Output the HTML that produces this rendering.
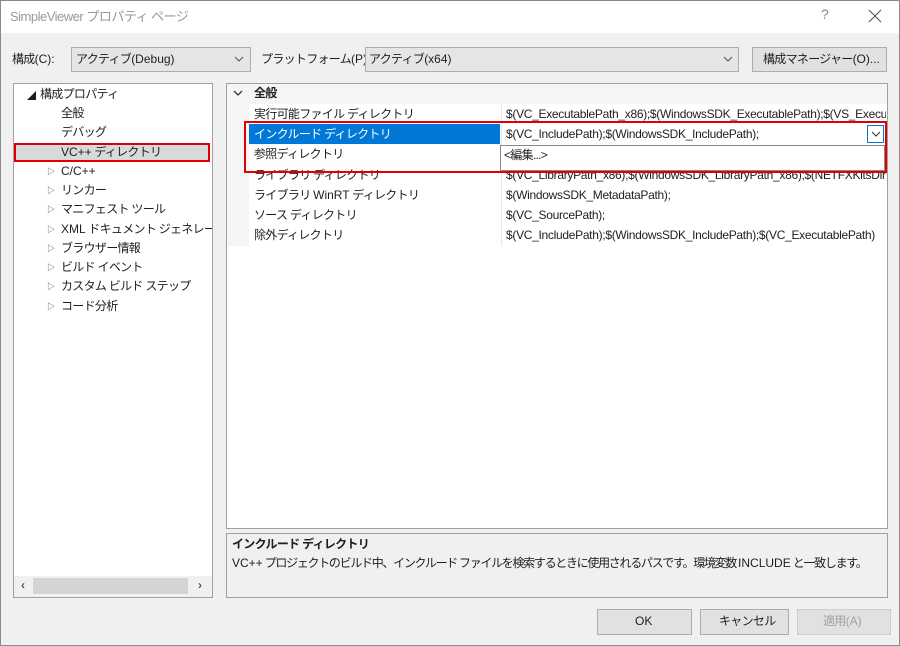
<!DOCTYPE html>
<html><head><meta charset="utf-8"><style>
*{margin:0;padding:0;box-sizing:border-box}
body{width:900px;height:646px;background:#f0f0f0;font-family:"Liberation Sans","Noto Sans CJK JP",sans-serif;font-size:12px;letter-spacing:-0.7px;color:#1e1e1e;position:relative;overflow:hidden}
.a{position:absolute;white-space:nowrap}
.box{position:absolute;border:1px solid #adadad}
.t{line-height:19px}
.l{letter-spacing:0}
.tri{position:absolute;left:47px;font-size:8px;color:#444}
</style></head><body>
<div class="a" style="left:0;top:0;width:900px;height:646px;border:1px solid #8a8a8a"></div>
<div class="a" style="left:1px;top:1px;width:898px;height:32px;background:#fff"></div>
<div class="a t" style="left:10px;top:7px;font-size:13px;color:#999;letter-spacing:-0.5px">SimpleViewer プロパティ ページ</div>
<div class="a" style="left:821px;top:6px;font-size:14px;color:#888">?</div>
<svg class="a" style="left:868px;top:9px" width="14" height="14"><path d="M1 1L13 13M13 1L1 13" stroke="#555" stroke-width="1.1"/></svg>

<div class="a t" style="left:12px;top:50px">構成<span class="l">(C):</span></div>
<div class="box" style="left:71px;top:47px;width:180px;height:25px;background:#e5e5e5"></div>
<div class="a t" style="left:76px;top:50px">アクティブ<span class="l">(Debug)</span></div>
<svg class="a" style="left:234px;top:56px" width="10" height="7"><path d="M1 1L5 5L9 1" stroke="#555" fill="none"/></svg>
<div class="a t" style="left:261px;top:50px">プラットフォーム<span class="l">(P):</span></div>
<div class="box" style="left:365px;top:47px;width:374px;height:25px;background:#e5e5e5"></div>
<div class="a t" style="left:369px;top:50px">アクティブ<span class="l">(x64)</span></div>
<svg class="a" style="left:723px;top:56px" width="10" height="7"><path d="M1 1L5 5L9 1" stroke="#555" fill="none"/></svg>
<div class="box" style="left:752px;top:47px;width:135px;height:25px;background:#e1e1e1"></div>
<div class="a t" style="left:763px;top:50px">構成マネージャー<span class="l">(O)...</span></div>

<div class="box" style="left:13px;top:83px;width:200px;height:515px;background:#fff;border-color:#a0a0a0"></div>
<div class="a" style="left:14px;top:143px;width:196px;height:19px;background:#d9d9d9;border:2px solid #e00000"></div>
<div class="a" style="left:27px;top:89px;font-size:9px">◢</div>
<div class="a t" style="left:40px;top:85px">構成プロパティ</div>
<div class="a t" style="left:61px;top:104px">全般</div>
<div class="a t" style="left:61px;top:123px">デバッグ</div>
<div class="a t" style="left:61px;top:143px"><span class="l">VC++</span> ディレクトリ</div>
<div class="a" style="left:14px;top:162px;width:198px;height:160px;overflow:hidden">
<div class="tri" style="left:33px;top:4px">▷</div><div class="a t l" style="left:47px;top:0">C/C++</div>
<div class="tri" style="left:33px;top:23px">▷</div><div class="a t" style="left:47px;top:19px">リンカー</div>
<div class="tri" style="left:33px;top:42px">▷</div><div class="a t" style="left:47px;top:38px">マニフェスト ツール</div>
<div class="tri" style="left:33px;top:62px">▷</div><div class="a t" style="left:47px;top:58px"><span class="l">XML</span> ドキュメント ジェネレーター</div>
<div class="tri" style="left:33px;top:81px">▷</div><div class="a t" style="left:47px;top:77px">ブラウザー情報</div>
<div class="tri" style="left:33px;top:100px">▷</div><div class="a t" style="left:47px;top:96px">ビルド イベント</div>
<div class="tri" style="left:33px;top:119px">▷</div><div class="a t" style="left:47px;top:115px">カスタム ビルド ステップ</div>
<div class="tri" style="left:33px;top:139px">▷</div><div class="a t" style="left:47px;top:135px">コード分析</div>
</div>
<div class="a" style="left:14px;top:576px;width:198px;height:21px;background:#f0f0f0"></div>
<div class="a" style="left:33px;top:578px;width:155px;height:16px;background:#d4d4d4"></div>
<div class="a" style="left:21px;top:578px;color:#555;font-weight:bold">‹</div>
<div class="a" style="left:198px;top:578px;color:#555;font-weight:bold">›</div>

<div class="box" style="left:226px;top:83px;width:662px;height:446px;background:#fff;border-color:#a0a0a0"></div>
<div class="a" style="left:227px;top:84px;width:660px;height:20px;background:#f5f5f5"></div>
<div class="a" style="left:227px;top:104px;width:22px;height:142px;background:#f5f5f5"></div>
<svg class="a" style="left:233px;top:90px" width="10" height="7"><path d="M1 1L5 5L9 1" stroke="#333" fill="none" stroke-width="1.3"/></svg>
<div class="a t" style="left:254px;top:84px;font-weight:bold">全般</div>
<div class="a" style="left:249px;top:124px;width:251px;height:20px;background:#0078d7"></div>
<div class="a" style="left:501px;top:104px;width:1px;height:142px;background:#e8e8e8"></div>
<div class="a t" style="left:254px;top:104px;line-height:20.2px">
<div>実行可能ファイル ディレクトリ</div><div style="color:#fff">インクルード ディレクトリ</div><div>参照ディレクトリ</div><div>ライブラリ ディレクトリ</div><div>ライブラリ <span class="l">WinRT</span> ディレクトリ</div><div>ソース ディレクトリ</div><div>除外ディレクトリ</div></div>
<div class="a t" style="left:506px;top:104px;line-height:20.2px;width:380px;overflow:hidden;letter-spacing:-0.3px">
<div>$(VC_ExecutablePath_x86);$(WindowsSDK_ExecutablePath);$(VS_ExecutablePath)</div><div>$(VC_IncludePath);$(WindowsSDK_IncludePath);</div><div>&nbsp;</div><div>$(VC_LibraryPath_x86);$(WindowsSDK_LibraryPath_x86);$(NETFXKitsDir)</div><div>$(WindowsSDK_MetadataPath);</div><div>$(VC_SourcePath);</div><div>$(VC_IncludePath);$(WindowsSDK_IncludePath);$(VC_ExecutablePath)</div></div>
<div class="a" style="left:867px;top:125px;width:17px;height:18px;border:1px solid #0078d7;background:#fff"></div>
<svg class="a" style="left:871px;top:131px" width="10" height="7"><path d="M1 1L5 5L9 1" stroke="#333" fill="none"/></svg>
<div class="a" style="left:500px;top:145px;width:385px;height:26px;background:#fff;border:1px solid #888"></div>
<div class="a t" style="left:504px;top:146px">&lt;編集...&gt;</div>
<div class="a" style="left:244px;top:121px;width:643px;height:52px;border:2px solid #e00000"></div>

<div class="box" style="left:226px;top:533px;width:662px;height:65px;background:#f0f0f0;border-color:#a0a0a0"></div>
<div class="a t" style="left:232px;top:535px;font-weight:bold">インクルード ディレクトリ</div>
<div class="a t" style="left:232px;top:554px;letter-spacing:-1.3px"><span class="l">VC++</span> プロジェクトのビルド中、インクルード ファイルを検索するときに使用されるパスです。環境変数 <span class="l">INCLUDE</span> と一致します。</div>

<div class="box" style="left:597px;top:609px;width:95px;height:26px;background:#e1e1e1"></div>
<div class="a t l" style="left:635px;top:612px">OK</div>
<div class="box" style="left:700px;top:609px;width:89px;height:26px;background:#e1e1e1"></div>
<div class="a t" style="left:719px;top:612px">キャンセル</div>
<div class="box" style="left:797px;top:609px;width:94px;height:26px;background:#e1e1e1;border-color:#cfcfcf"></div>
<div class="a t" style="left:823px;top:612px;color:#a0a0a0">適用<span class="l">(A)</span></div>
</body></html>
